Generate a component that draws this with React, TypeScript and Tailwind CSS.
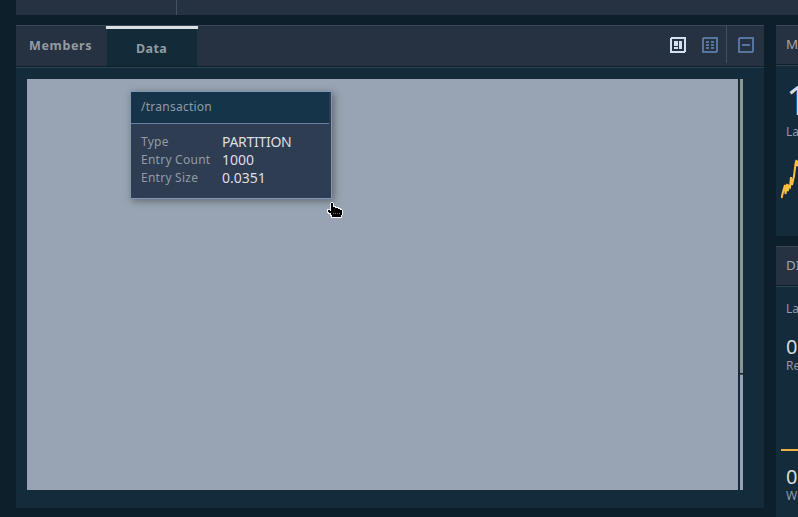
import React from "react";

function ViewIcons() {
  return (
    <div className="flex h-full items-start">
      <svg className="mt-[11px] mr-4 h-4 w-4" viewBox="0 0 16 16" shapeRendering="crispEdges">
        <rect x="1" y="1" width="14" height="14" rx="1" fill="none" stroke="#d3e2f2" strokeWidth="2" />
        <path d="M4 4h4v5H4zM9 4h3v8H9zM4 10h4v2H4z" fill="#d3e2f2" />
      </svg>
      <svg className="mt-[11px] mr-2 h-4 w-4" viewBox="0 0 16 16" shapeRendering="crispEdges">
        <rect x="1" y="1" width="14" height="14" rx="1" fill="none" stroke="#56759f" strokeWidth="2" />
        <path d="M4 4h3v2H4zM9 4h3v2H9zM4 7h3v2H4zM9 7h3v2H9zM4 10h3v2H4zM9 10h3v2H9z" fill="#56759f" />
      </svg>
      <div className="h-[37px] w-px bg-[#3e4f66]" />
      <svg className="mt-[11px] mr-[10px] ml-[11px] h-4 w-4" viewBox="0 0 16 16" shapeRendering="crispEdges">
        <rect x="1" y="1" width="14" height="14" rx="1" fill="none" stroke="#56759f" strokeWidth="2" />
        <path d="M4 7h8v2H4z" fill="#56759f" />
      </svg>
    </div>
  );
}

function Row({ label, value, tight }: { label: string; value: string; tight?: boolean }) {
  return (
    <div className="flex h-[18px] whitespace-nowrap">
      <span className="w-[81px] text-[12px] leading-[18px] tracking-[0.25px] text-[#929ba6]">{label}</span>
      <span className={`text-[14px] leading-[17px] text-[#dddfe1] ${tight ? "tracking-[-0.3px]" : ""}`}>
        {value}
      </span>
    </div>
  );
}

function Pointer() {
  return (
    <svg className="absolute top-[202px] left-[327px] h-4 w-4" viewBox="0 0 16 16" shapeRendering="crispEdges">
      <path
        d="M4 0h2v1h1v3h2v1h3v1h2v1h1v1h1v5h-1v3H4v-2H3v-2H1v-1H0V7h3V1h1z"
        fill="#f2f4f6"
      />
      <path d="M4 1h2v4h2v1h3v1h2v1h2v5h-1v2H5v-2H4v-2H2v-1H1V8h2v1h1z" fill="#000" />
      <path d="M6 11h1v1H6zM8 11h1v1H8zM10 11h1v1h-1zM12 11h1v1h-1z" fill="#687078" />
    </svg>
  );
}

export default function App() {
  return (
    <div className="relative flex h-[517px] w-[798px] flex-col overflow-hidden bg-[#0d1f2a] pl-4 font-['Noto_Sans',sans-serif]">
      <div className="flex h-[15px] shrink-0 bg-[#263241]">
        <div className="ml-40 w-px bg-[#3f5067]" />
      </div>

      <div className="mt-[10px] flex gap-3">
        <section className="flex h-[483px] w-[748px] shrink-0 flex-col bg-[#132b3a]">
          <header className="flex h-[42px] shrink-0 justify-between border-t border-b border-t-[#3a4653] border-b-[#0d202c] bg-[#263241]">
            <div className="flex">
              <div className="w-[91px] pt-[11px] pl-[13px] text-[12.5px] leading-[18px] font-bold tracking-[0.65px] text-[#929ba3]">
                Members
              </div>
              <div className="relative w-[90px] bg-[#132b38] pt-[14px] pl-[29px] text-[12.5px] leading-[18px] font-bold tracking-[0.4px] text-[#929ba3]">
                <div className="absolute top-0 -left-px h-[3px] w-[92px] bg-[#dce0e0]" />
                Data
              </div>
            </div>
            <ViewIcons />
          </header>
          <div className="flex gap-[2px] border-t border-[#2c4250] pt-[11px] pl-[11px]">
            <div className="h-[411px] w-[711px] bg-[#98a4b3]" />
            <div className="flex w-[3px] flex-col">
              <div className="h-[294px] bg-[#929393]" />
              <div className="h-[2px] border-b border-[#435563] bg-[#132b3a]" />
              <div className="h-[115px] bg-[#98a4b3]" />
            </div>
          </div>
        </section>

        <aside className="flex w-[22px] shrink-0 flex-col gap-[10px] overflow-hidden whitespace-nowrap">
          <section className="h-[211px] bg-[#132b3a]">
            <header className="h-10 border-t border-b border-t-[#3a4653] border-b-[#0d202c] bg-[#263241] pt-[9px] pl-[10px] text-[13.33px] leading-[18px] text-[#a1a6ad]">
              MEMORY
            </header>
            <div className="h-[171px] border-t border-[#2c4250]">
              <div className="h-[57px] pt-[10px] pl-[10px] text-[40px] leading-[48px] text-[#d7dbde]">1</div>
              <div className="pl-[10px] text-[12px] leading-[17px] text-[#929ba6]">Last</div>
              <svg className="mt-[14px] ml-[5px] h-12 w-[17px]" viewBox="0 0 17 48">
                <path
                  d="M.5 44 2 38l2-7 .5 9L6 30l.8 7L8 32l1 1 1-10 1 8 2-9 1.5-12L15.500 6l.5 6 1-5"
                  fill="none"
                  stroke="#ffbd46"
                  strokeWidth="2"
                />
              </svg>
            </div>
          </section>
          <section className="h-[271px] bg-[#132b3a]">
            <header className="h-10 border-t border-b border-t-[#3a4653] border-b-[#0d202c] bg-[#263241] pt-[9px] pl-[10px] text-[13.33px] leading-[18px] text-[#a1a6ad]">
              DISK
            </header>
            <div className="border-t border-[#2c4250] pl-[10px] text-[12px] leading-[17px] text-[#929ba6]">
              <div className="pt-[13px]">Last</div>
              <div className="mt-[18px] text-[20px] leading-6 text-[#d7dbde]">0</div>
              <div className="-mt-[2px]">Reads</div>
              <div className="mt-[75px] -ml-[5px] h-[2px] bg-[#f0b143]" />
              <div className="mt-[14px] text-[20px] leading-6 text-[#d7dbde]">0</div>
              <div className="-mt-[2px]">Writes</div>
            </div>
          </section>
        </aside>
      </div>

      <div className="absolute top-[91px] left-[130px] h-[108px] w-[202px] border border-[#8097b8] bg-[#2e3d51] shadow-[2px_2px_7px_0px_rgba(60,60,60,0.6)]">
        <div className="mr-[2px] h-8 border-b border-[#6880a1] bg-[#15344a] pt-[6px] pl-[10px] text-[12px] leading-[18px] tracking-[0.25px] text-[#929ba6]">
          /transaction
        </div>
        <div className="pt-[9px] pl-[10px]">
          <Row label="Type" value="PARTITION" tight />
          <Row label="Entry Count" value="1000" />
          <Row label="Entry Size" value="0.0351" />
        </div>
      </div>
      <Pointer />
    </div>
  );
}
